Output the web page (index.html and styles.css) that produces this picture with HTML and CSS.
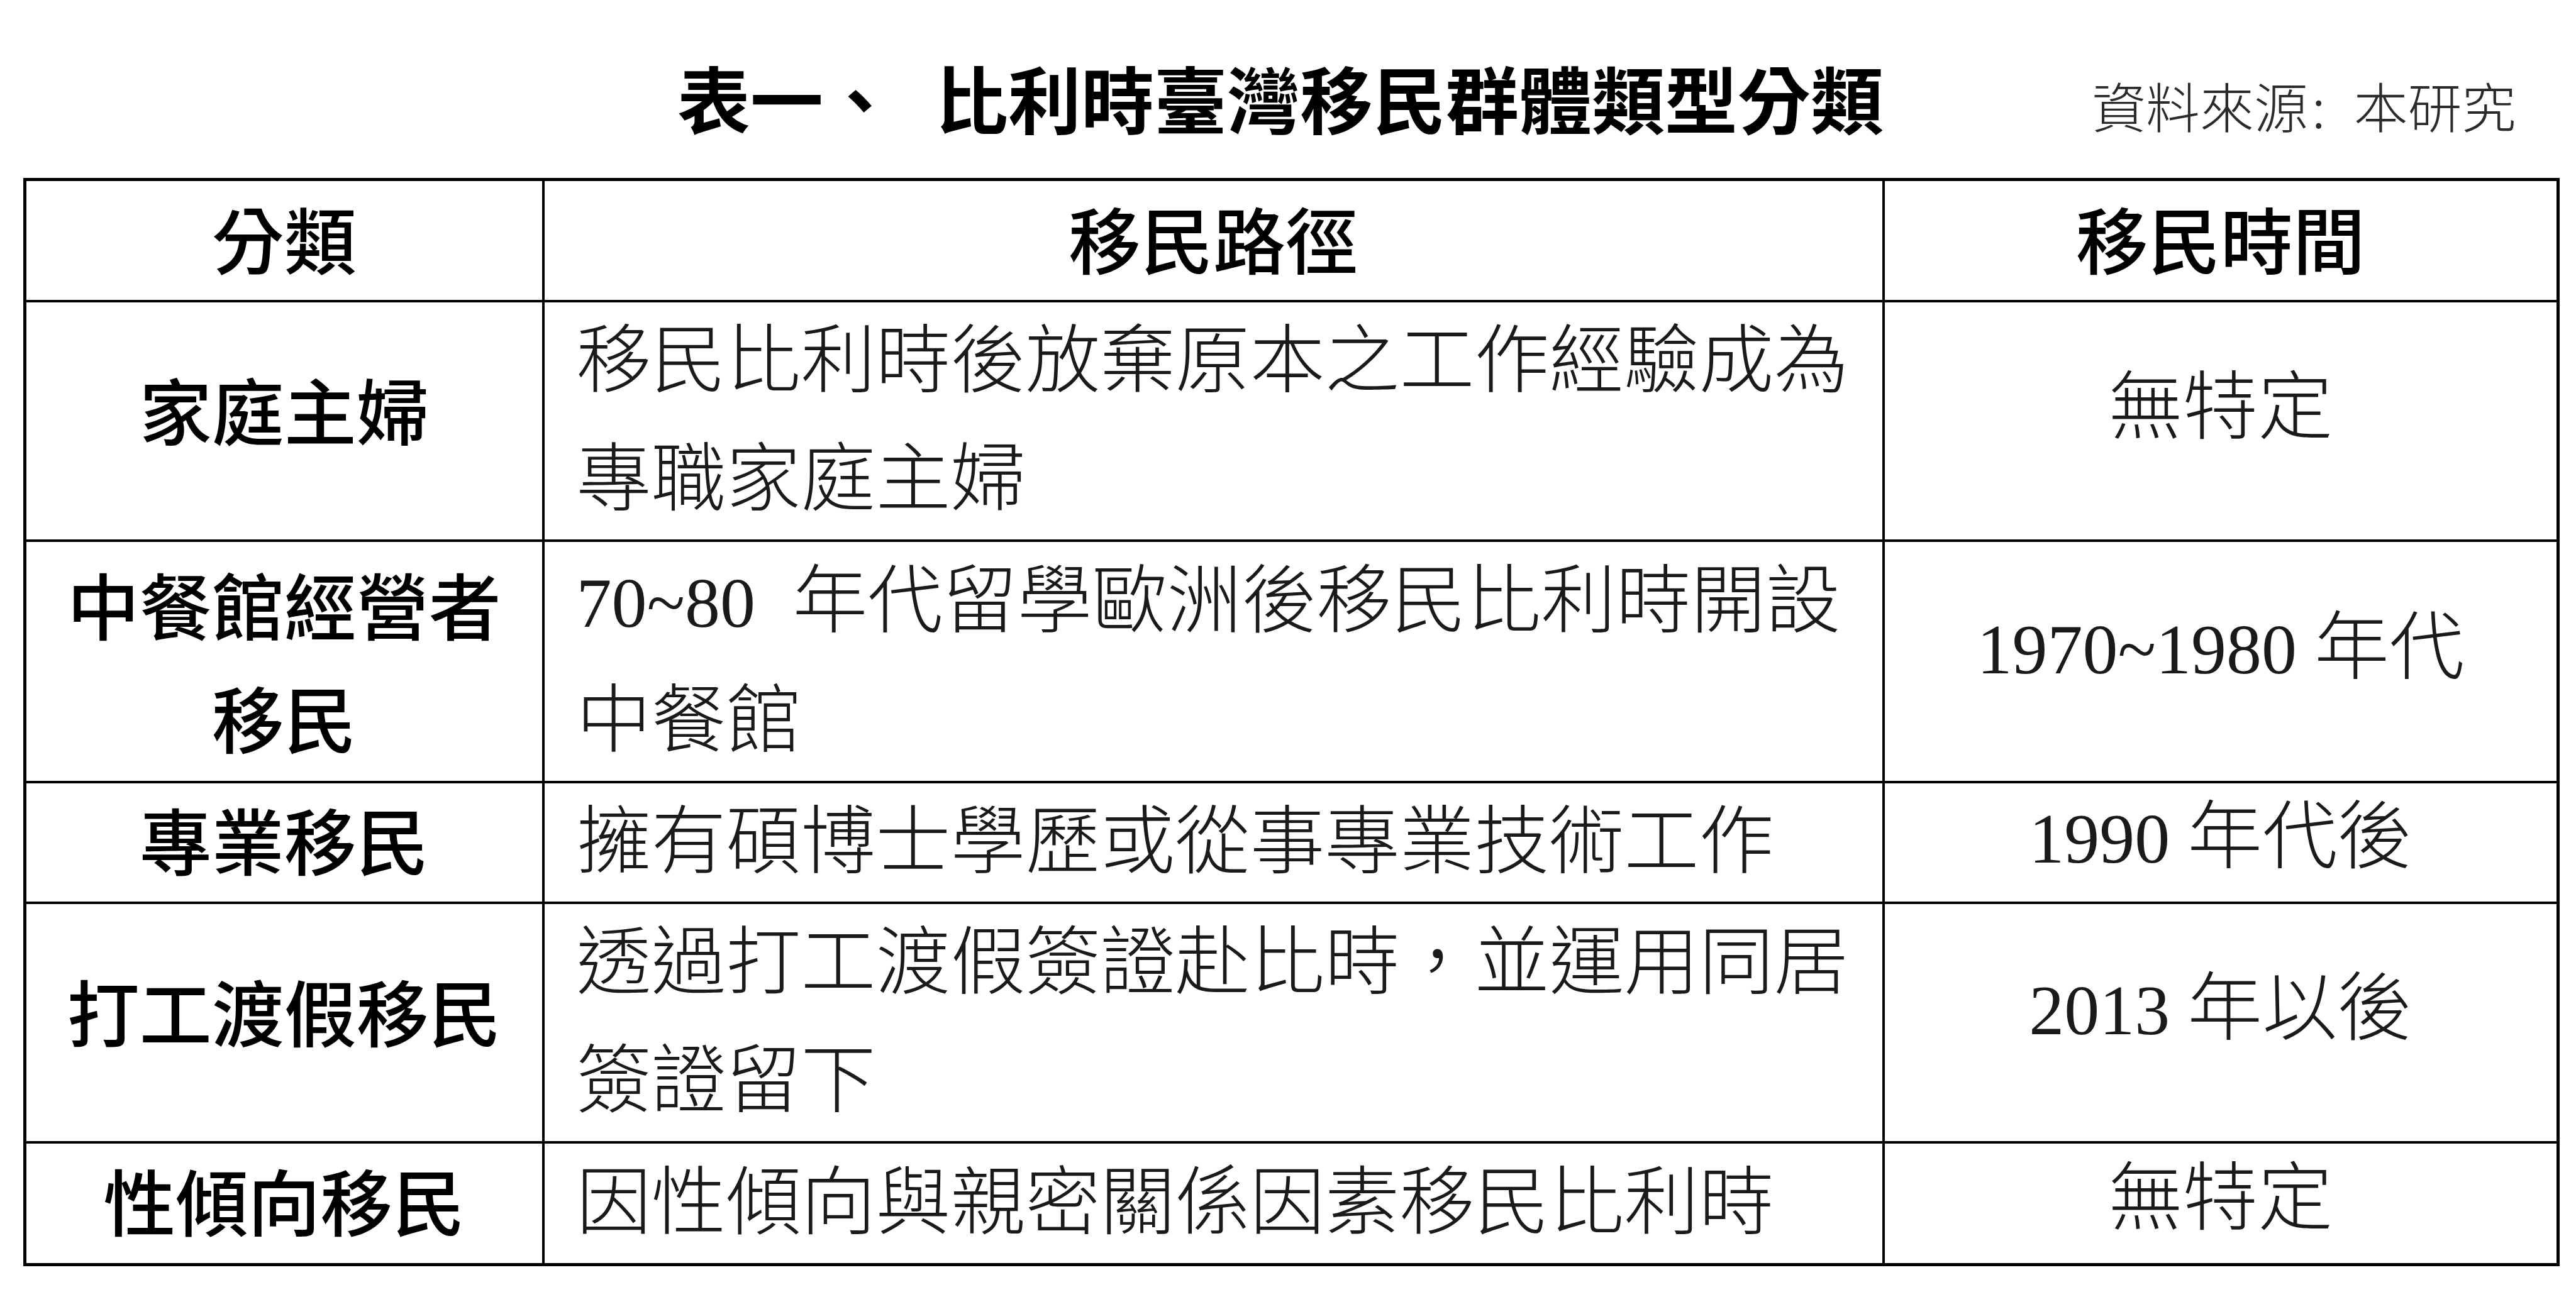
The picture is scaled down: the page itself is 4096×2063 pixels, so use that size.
FILE: index.html
```html
<!DOCTYPE html>
<html lang="zh-Hant">
<head>
<meta charset="utf-8">
<title>表一、比利時臺灣移民群體類型分類</title>
<link rel="stylesheet" href="styles.css">
</head>
<body>
<div class="page">
  <div class="caption">
    <h1 class="title"><span class="title-num">表一、</span>比利時臺灣移民群體類型分類</h1>
    <div class="source">資料來源<span class="colon">:</span> 本研究</div>
  </div>
  <table class="grid">
    <colgroup>
      <col class="c-cat">
      <col class="c-path">
      <col class="c-time">
    </colgroup>
    <thead>
      <tr class="row-head">
        <th>分類</th>
        <th>移民路徑</th>
        <th>移民時間</th>
      </tr>
    </thead>
    <tbody>
      <tr class="row-2">
        <td class="cat lift">家庭主婦</td>
        <td class="path">移民比利時後放棄原本之工作經驗成為<br>專職家庭主婦</td>
        <td class="time lift">無特定</td>
      </tr>
      <tr class="row-2b">
        <td class="cat two">中餐館經營者<br>移民</td>
        <td class="path"><span class="num">70~80</span>&nbsp; 年代留學歐洲後移民比利時開設<br>中餐館</td>
        <td class="time lift"><span class="num">1970~1980 </span>年代</td>
      </tr>
      <tr class="row-1">
        <td class="cat">專業移民</td>
        <td class="path">擁有碩博士學歷或從事專業技術工作</td>
        <td class="time"><span class="num">1990 </span>年代後</td>
      </tr>
      <tr class="row-2">
        <td class="cat lift">打工渡假移民</td>
        <td class="path">透過打工渡假簽證赴比時，並運用同居<br>簽證留下</td>
        <td class="time lift"><span class="num">2013 </span>年以後</td>
      </tr>
      <tr class="row-1b">
        <td class="cat">性傾向移民</td>
        <td class="path">因性傾向與親密關係因素移民比利時</td>
        <td class="time">無特定</td>
      </tr>
    </tbody>
  </table>
</div>
</body>
</html>
```

FILE: styles.css
```css
html, body {
  margin: 0;
  padding: 0;
  background: #ffffff;
}

body {
  font-family: "Noto Sans CJK TC", "Noto Sans CJK SC", sans-serif;
  color: #1a1a1a;
}

.page {
  width: 4096px;
  height: 2063px;
  box-sizing: border-box;
  padding: 95px 0 0 37px;
}

.caption {
  display: flex;
  align-items: baseline;
  width: 4028px;
  margin-bottom: 72px;
}

.title {
  margin: 0 0 0 1040px;
  font-size: 116px;
  line-height: 116px;
  font-weight: 700;
  color: #000;
  white-space: nowrap;
}

.title-num {
  margin-right: 62px;
}

.source {
  margin-left: 331px;
  font-size: 86px;
  line-height: 86px;
  font-weight: 300;
  color: #2b2b2b;
  white-space: nowrap;
}

.colon {
  margin: 0 26px 0 6px;
}

.grid {
  width: 4028px;
  table-layout: fixed;
  border-collapse: collapse;
  border: 5px solid #000;
}

.c-cat { width: 824px; }
.c-path { width: 2131px; }
.c-time { width: 1073px; }

.grid th,
.grid td {
  border: 4px solid #000;
  padding: 0;
  vertical-align: middle;
  white-space: nowrap;
}

.grid th {
  font-size: 115px;
  line-height: 150px;
  font-weight: 500;
  color: #000;
  text-align: center;
  padding-bottom: 10px;
}

.row-head { height: 193px; }
.row-2 { height: 381px; }
.row-2b { height: 384px; }
.row-1 { height: 192px; }
.row-1b { height: 195px; }

.cat {
  font-size: 115px;
  line-height: 150px;
  font-weight: 500;
  color: #000;
  text-align: center;
}

.cat.two {
  line-height: 180px;
}

.grid td.cat,
.grid td.time {
  padding-bottom: 14px;
}

.grid td.cat.two {
  padding-bottom: 6px;
}

.grid td.lift {
  padding-bottom: 40px;
}

.path {
  font-family: "Liberation Serif", "Noto Sans CJK TC", serif;
  font-size: 119px;
  line-height: 188px;
  font-weight: 300;
  text-align: left;
}

.grid td.path {
  padding-left: 51px;
}

.time {
  font-family: "Liberation Serif", "Noto Sans CJK TC", serif;
  font-size: 119px;
  line-height: 150px;
  font-weight: 300;
  text-align: center;
}

.num {
  font-family: "Liberation Serif", serif;
  font-size: 112px;
  font-weight: 400;
}
```
